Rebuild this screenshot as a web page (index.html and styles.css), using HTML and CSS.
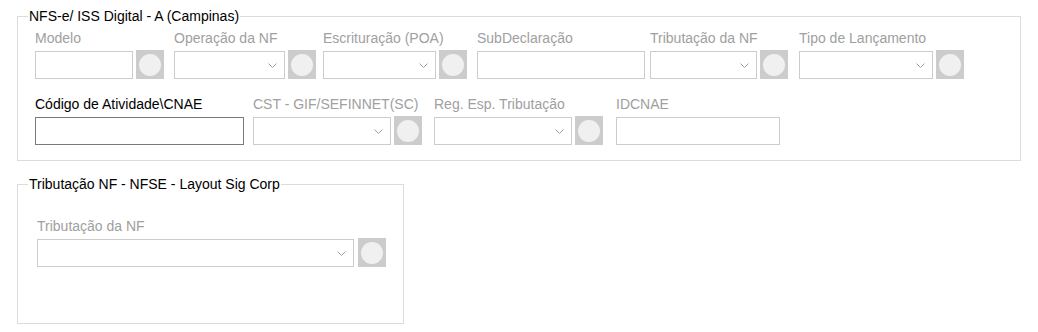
FILE: index.html
```html
<html>
<head>
  <title>NFS-e</title>
  <link rel="stylesheet" href="styles.css">
</head>
<body>
  <div class="page">
    <fieldset class="group group-nfse">
      <legend>NFS-e/ ISS Digital - A (Campinas)</legend>
      <div class="row">
        <div class="field f-modelo">
          <label class="lbl">Modelo</label>
          <div class="ctl">
            <input class="edit w-modelo" disabled>
            <button class="lookup" disabled></button>
          </div>
        </div>
        <div class="field f-operacao">
          <label class="lbl">Operação da NF</label>
          <div class="ctl">
            <div class="edit combo w-operacao"><svg class="chev" width="9" height="5"><polyline points="0.5,0.5 4.5,4.5 8.5,0.5" /></svg></div>
            <button class="lookup" disabled></button>
          </div>
        </div>
        <div class="field f-escrit">
          <label class="lbl">Escrituração (POA)</label>
          <div class="ctl">
            <div class="edit combo w-escrit"><svg class="chev" width="9" height="5"><polyline points="0.5,0.5 4.5,4.5 8.5,0.5" /></svg></div>
            <button class="lookup" disabled></button>
          </div>
        </div>
        <div class="field f-subdecl">
          <label class="lbl">SubDeclaração</label>
          <div class="ctl">
            <input class="edit w-subdecl" disabled>
          </div>
        </div>
        <div class="field f-trib">
          <label class="lbl">Tributação da NF</label>
          <div class="ctl">
            <div class="edit combo w-trib"><svg class="chev" width="9" height="5"><polyline points="0.5,0.5 4.5,4.5 8.5,0.5" /></svg></div>
            <button class="lookup" disabled></button>
          </div>
        </div>
        <div class="field">
          <label class="lbl">Tipo de Lançamento</label>
          <div class="ctl">
            <div class="edit combo w-tipo"><svg class="chev" width="9" height="5"><polyline points="0.5,0.5 4.5,4.5 8.5,0.5" /></svg></div>
            <button class="lookup" disabled></button>
          </div>
        </div>
      </div>

      <div class="row">
        <div class="field f-cnae">
          <label class="lbl lbl-on">Código de Atividade\CNAE</label>
          <div class="ctl">
            <input class="edit edit-on w-cnae">
          </div>
        </div>
        <div class="field f-cst">
          <label class="lbl">CST - GIF/SEFINNET(SC)</label>
          <div class="ctl">
            <div class="edit combo w-cst"><svg class="chev" width="9" height="5"><polyline points="0.5,0.5 4.5,4.5 8.5,0.5" /></svg></div>
            <button class="lookup" disabled></button>
          </div>
        </div>
        <div class="field f-regesp">
          <label class="lbl">Reg. Esp. Tributação</label>
          <div class="ctl">
            <div class="edit combo w-regesp"><svg class="chev" width="9" height="5"><polyline points="0.5,0.5 4.5,4.5 8.5,0.5" /></svg></div>
            <button class="lookup" disabled></button>
          </div>
        </div>
        <div class="field">
          <label class="lbl">IDCNAE</label>
          <div class="ctl">
            <input class="edit w-idcnae" disabled>
          </div>
        </div>
      </div>
    </fieldset>

    <fieldset class="group group-sig">
      <legend>Tributação NF - NFSE - Layout Sig Corp</legend>
      <div class="row">
        <div class="field">
          <label class="lbl">Tributação da NF</label>
          <div class="ctl">
            <div class="edit combo w-sig"><svg class="chev" width="9" height="5"><polyline points="0.5,0.5 4.5,4.5 8.5,0.5" /></svg></div>
            <button class="lookup lookup-wide" disabled></button>
          </div>
        </div>
      </div>
    </fieldset>
  </div>
</body>
</html>
```

FILE: styles.css
```css
body {
  margin: 0;
  background-color: #ffffff;
  font-family: "Liberation Sans", Arial, sans-serif;
  font-size: 14px;
  color: #000000;
}

.page {
  padding: 8px 0 0 17px;
}

/* caixas de grupo */
.group {
  box-sizing: border-box;
  margin: 0;
  border: 1px solid #dcdcdc;
  min-width: 0;
}
.group legend {
  padding: 0 1px;
  line-height: 16px;
}
.group-nfse {
  width: 1004px;
  padding: 6px 17px 15px 17px;
}
.group-nfse legend {
  margin-left: -7px;
}
.group-sig {
  width: 387px;
  margin-top: 15px;
  padding: 26px 19px 56px 19px;
}
.group-sig legend {
  margin-left: -9px;
}

.row {
  display: flex;
}
.row + .row {
  margin-top: 17px;
}

.field {
  flex: none;
  display: flex;
  flex-direction: column;
}
.f-modelo { width: 139px; }
.f-operacao { width: 149px; }
.f-escrit { width: 154px; }
.f-subdecl { width: 173px; }
.f-trib { width: 149px; }
.f-cnae { width: 218px; }
.f-cst { width: 181px; }
.f-regesp { width: 182px; }

.lbl {
  display: block;
  height: 16px;
  line-height: 16px;
  margin-bottom: 5px;
  color: #a0a0a0;
  white-space: nowrap;
}
.lbl-on {
  color: #000000;
}

.ctl {
  display: flex;
  align-items: flex-start;
  gap: 3px;
}

.edit {
  box-sizing: border-box;
  height: 28px;
  margin: 0;
  padding: 0 4px;
  border: 1px solid #cccccc;
  background-color: #ffffff;
  font: inherit;
  outline: none;
}
.edit-on {
  border-color: #7a7a7a;
}
.combo {
  position: relative;
}
.chev {
  position: absolute;
  right: 7px;
  top: 11px;
}
.chev polyline {
  fill: none;
  stroke: #a0a0a0;
  stroke-width: 1;
}

.w-modelo { width: 98px; }
.w-operacao { width: 111px; }
.w-escrit { width: 113px; }
.w-subdecl { width: 168px; }
.w-trib { width: 107px; }
.w-tipo { width: 134px; }
.w-cnae { width: 209px; }
.w-cst { width: 138px; }
.w-regesp { width: 138px; }
.w-idcnae { width: 164px; }
.w-sig { width: 317px; }

/* botao de pesquisa */
.lookup {
  width: 28px;
  height: 29px;
  margin-top: -1px;
  padding: 0;
  border: none;
  background-color: #cccccc;
  display: flex;
  align-items: center;
  justify-content: center;
}
.lookup::before {
  content: "";
  width: 22px;
  height: 22px;
  border-radius: 50%;
  background-color: #f0f0f0;
}
.lookup-wide {
  margin-left: 1px;
}
```
